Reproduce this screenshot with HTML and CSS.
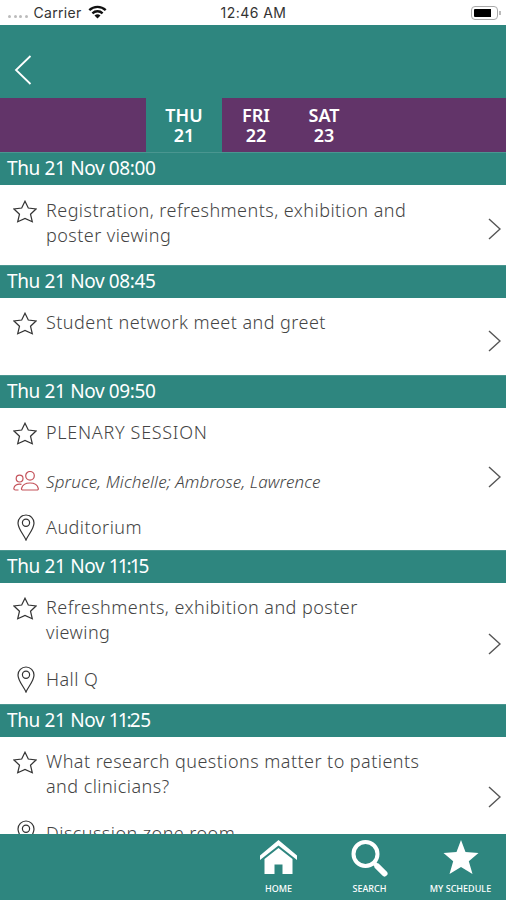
FILE: index.html
```
<!DOCTYPE html>
<html lang="en">

<head>
    <meta charset="UTF-8">
    <meta name="viewport" content="width=device-width, initial-scale=1.0">
    <title>Schedule</title>
    <link rel="stylesheet" href="styles.css">
</head>

<body>
    <!-- icons shared by the rows -->
    <svg class="sprite">
        <symbol id="star" viewBox="0 0 24 23">
            <path d="M12 1.200 L15.300 8 L23 9 L17.500 14.200 L19.300 21.800 L12 18.500 L4.700 21.800 L6.500 14.200 L1 9 L8.700 8 Z" />
        </symbol>
        <symbol id="pin" viewBox="0 0 18 27">
            <path d="M9 26 C7 21 1 15 1 9 A8 8 0 0 1 17 9 C17 15 11 21 9 26 Z" />
            <circle cx="9" cy="8.7" r="3.6" />
        </symbol>
        <symbol id="people" viewBox="0 0 26 20">
            <circle cx="17" cy="4.800" r="4.300" />
            <circle cx="6.6" cy="7.6" r="3.4" />
            <path d="M8.500 17.500 C9.500 13.800 12.500 12 17 12 S24.500 13.800 25.300 17.500 Q25.400 19 24 19 H10 Q8.300 19 8.500 17.500 Z" />
            <path d="M8.500 13.400 C4 12.600 1.200 14.500 .8 17.500 Q.8 19 2.500 19 H5.500" />
        </symbol>
        <symbol id="next" viewBox="0 0 13 22">
            <path d="M1 1 L12 11 L1 21" />
        </symbol>
    </svg>

    <div class="app">
        <div class="status">
            <div class="carrier">
                <i></i><i></i><i></i><i></i>
                <span>Carrier</span>
                <svg class="wifi" width="19" height="14" viewBox="0 0 19 14">
                    <path d="M1.300 5.100 A12 12 0 0 1 17.700 5.100 M4.400 8.300 A7.500 7.500 0 0 1 14.600 8.300" />
                    <path class="dot" d="M9.500 13.500 L6.500 10.600 A4.500 4.500 0 0 1 12.500 10.600 Z" />
                </svg>
            </div>
            <div class="time">12:46 AM</div>
            <div class="power">
                <div class="battery"></div>
                <div class="cap"></div>
            </div>
        </div>

        <div class="header">
            <svg width="18" height="30" viewBox="0 0 18 30">
                <path d="M16.500 1 L2 15 L16.500 29" />
            </svg>
        </div>

        <div class="days">
            <a class="day current">THU<br>21</a>
            <a class="day">FRI<br>22</a>
            <a class="day">SAT<br>23</a>
        </div>

        <div class="list">
            <h2>Thu 21 Nov 08:00</h2>
            <div class="row row1">
                <div class="info">
                    <div class="line">
                        <svg class="star"><use href="#star" /></svg>
                        <p>Registration, refreshments, exhibition and<br>poster viewing</p>
                    </div>
                </div>
                <svg class="next"><use href="#next" /></svg>
            </div>

            <h2>Thu 21 Nov 08:45</h2>
            <div class="row row2">
                <div class="info">
                    <div class="line">
                        <svg class="star"><use href="#star" /></svg>
                        <p>Student network meet and greet</p>
                    </div>
                </div>
                <svg class="next"><use href="#next" /></svg>
            </div>

            <h2>Thu 21 Nov 09:50</h2>
            <div class="row row3">
                <div class="info">
                    <div class="line">
                        <svg class="star"><use href="#star" /></svg>
                        <p class="caps">PLENARY SESSION</p>
                    </div>
                    <div class="line speakers">
                        <svg class="people"><use href="#people" /></svg>
                        <p>Spruce, Michelle; Ambrose, Lawrence</p>
                    </div>
                    <div class="line place">
                        <svg class="pin"><use href="#pin" /></svg>
                        <p>Auditorium</p>
                    </div>
                </div>
                <svg class="next"><use href="#next" /></svg>
            </div>

            <h2>Thu 21 Nov <span class="tight">11:1</span>5</h2>
            <div class="row row4">
                <div class="info">
                    <div class="line">
                        <svg class="star"><use href="#star" /></svg>
                        <p>Refreshments, exhibition and poster<br>viewing</p>
                    </div>
                    <div class="line place">
                        <svg class="pin"><use href="#pin" /></svg>
                        <p>Hall Q</p>
                    </div>
                </div>
                <svg class="next"><use href="#next" /></svg>
            </div>

            <h2>Thu 21 Nov <span class="tight">11:</span>25</h2>
            <div class="row row5">
                <div class="info">
                    <div class="line">
                        <svg class="star"><use href="#star" /></svg>
                        <p>What research questions matter to patients<br>and clinicians?</p>
                    </div>
                    <div class="line place">
                        <svg class="pin"><use href="#pin" /></svg>
                        <p>Discussion zone room</p>
                    </div>
                </div>
                <svg class="next"><use href="#next" /></svg>
            </div>
        </div>

        <div class="footer">
            <a class="tab">
                <svg width="38" height="36" viewBox="0 0 38 36">
                    <path d="M18.500 0 L37 15.500 V20 L18.500 5.500 L0 20 V15.500 Z" />
                    <path d="M18.500 8 L32.500 19 V34 H22.500 V24.500 H14.500 V34 H4.500 V19 Z" />
                </svg>
                <span>HOME</span>
            </a>
            <a class="tab">
                <svg class="search" width="38" height="38" viewBox="0 0 38 38">
                    <circle cx="14.500" cy="14" r="12" />
                    <path class="neck" d="M22.500 22.500 L27 27" />
                    <path class="handle" d="M26.500 26.500 L33.500 33.500" />
                </svg>
                <span>SEARCH</span>
            </a>
            <a class="tab">
                <svg width="36" height="36" viewBox="0 0 36 36">
                    <path d="M18 0 L22.500 12 L35.500 13 L25.800 21.200 L29.500 34 L18 27 L6.500 34 L10.200 21.200 L.5 13 L13.500 12 Z" />
                </svg>
                <span>MY SCHEDULE</span>
            </a>
        </div>
    </div>
</body>

</html>
```
FILE: styles.css
```
* {
    margin: 0;
    padding: 0;
    box-sizing: border-box;
}

body {
    font-family: "Noto Sans", "Open Sans", sans-serif;
    color: #444;
    background-color: #fff;
}

svg {
    display: block;
    flex: none;
    fill: none;
}

.sprite {
    display: none;
}

.app {
    display: flex;
    flex-direction: column;
    height: 900px;
    overflow: hidden;
}

/* status bar */
.status {
    display: grid;
    grid-template-columns: 1fr auto 1fr;
    align-items: center;
    height: 25px;
    padding: 0 5px 0 8px;
    font-family: Inter, sans-serif;
    font-size: 14px;
    color: #333;
}

.carrier {
    display: flex;
    align-items: center;
}

.carrier i {
    width: 3px;
    height: 3px;
    margin: 8px 2.6px 0 0;
    border-radius: 50%;
    background-color: #bbb;
}

.carrier span {
    margin: 0 6px 0 3px;
    letter-spacing: .35px;
}

.time {
    margin-right: 2px;
    letter-spacing: .45px;
}

.wifi {
    margin-top: -1px;
    stroke: #111;
    stroke-width: 2.4;
}

.wifi .dot {
    fill: #111;
    stroke: none;
}

.power {
    display: flex;
    justify-content: flex-end;
    align-items: center;
}

.battery {
    width: 27px;
    height: 14px;
    border: 1px solid #aaa;
    border-radius: 4px;
    background: #000 content-box;
    padding: 2px 6px 2px 2px;
}

.cap {
    width: 2px;
    height: 4px;
    margin-left: 1px;
    background-color: #bbb;
}

/* header */
.header {
    display: flex;
    height: 73px;
    padding: 30px 0 0 14px;
    background-color: #2e867f;
}

.header svg {
    stroke: #fff;
    stroke-width: 1.8;
}

.days {
    display: flex;
    height: 54px;
    padding-left: 146px;
    background-color: #623469;
}

.day {
    width: 68px;
    padding-top: 7px;
    font-size: 18px;
    font-weight: 600;
    line-height: 20px;
    text-align: center;
    color: #fff;
}

.day.current {
    width: 76px;
    background-color: #2e867f;
}

/* sessions */
.list {
    flex: 1;
    min-height: 0;
    overflow: hidden;
}

h2 {
    height: 33px;
    padding-left: 7px;
    border-top: 1px solid #4a9690;
    font-size: 19px;
    font-weight: 400;
    line-height: 31px;
    letter-spacing: -.36px;
    color: #fff;
    background-color: #2e867f;
}

.tight {
    letter-spacing: -2px;
}

.row {
    display: flex;
    justify-content: space-between;
    align-items: center;
    padding: 0 5px 0 12px;
}

.row1 {
    height: 80px;
}

.row2 {
    height: 77px;
}

.row3 {
    height: 142px;
}

.row4 {
    height: 121px;
}

.row5 {
    height: 120px;
}

.info {
    align-self: flex-start;
    padding-top: 12px;
}

.row1 .info {
    padding-top: 13px;
}

.line {
    display: flex;
    font-size: 18px;
    font-weight: 300;
    line-height: 24.5px;
    letter-spacing: .45px;
}

.line svg {
    stroke: #333;
    stroke-width: 1.2;
}

.line .caps {
    letter-spacing: .7px;
}

.star {
    width: 24px;
    height: 23px;
    margin: 2px 9px 0 1px;
}

.pin {
    width: 18px;
    height: 27px;
    margin: -1px 11px 0 5px;
}

.line .people {
    width: 26px;
    height: 20px;
    margin: 1px 7px 0 1px;
    stroke: #c4525a;
}

.speakers {
    margin-top: 25px;
    font-size: 17px;
    font-style: italic;
    letter-spacing: .12px;
}

.place {
    margin-top: 20px;
}

.row4 .place,
.row5 .place {
    margin-top: 23px;
}

.next {
    width: 13px;
    height: 22px;
    stroke: #555;
    stroke-width: 1.4;
}

.row1 .next,
.row2 .next {
    margin-top: 8px;
}

.row3 .next {
    margin-bottom: 4px;
}

/* bottom bar */
.footer {
    display: flex;
    justify-content: flex-end;
    height: 66px;
    background-color: #2e867f;
}

.tab {
    display: flex;
    flex-direction: column;
    align-items: center;
    justify-content: space-between;
    width: 91px;
    padding: 6px 0 5px;
    font-size: 9px;
    font-weight: 500;
    line-height: 12px;
    color: #fff;
}

.tab svg {
    fill: #fff;
}

.tab .search {
    fill: none;
    stroke: #fff;
    stroke-width: 4;
}

.search .handle {
    stroke-width: 6;
    stroke-linecap: round;
}
```
